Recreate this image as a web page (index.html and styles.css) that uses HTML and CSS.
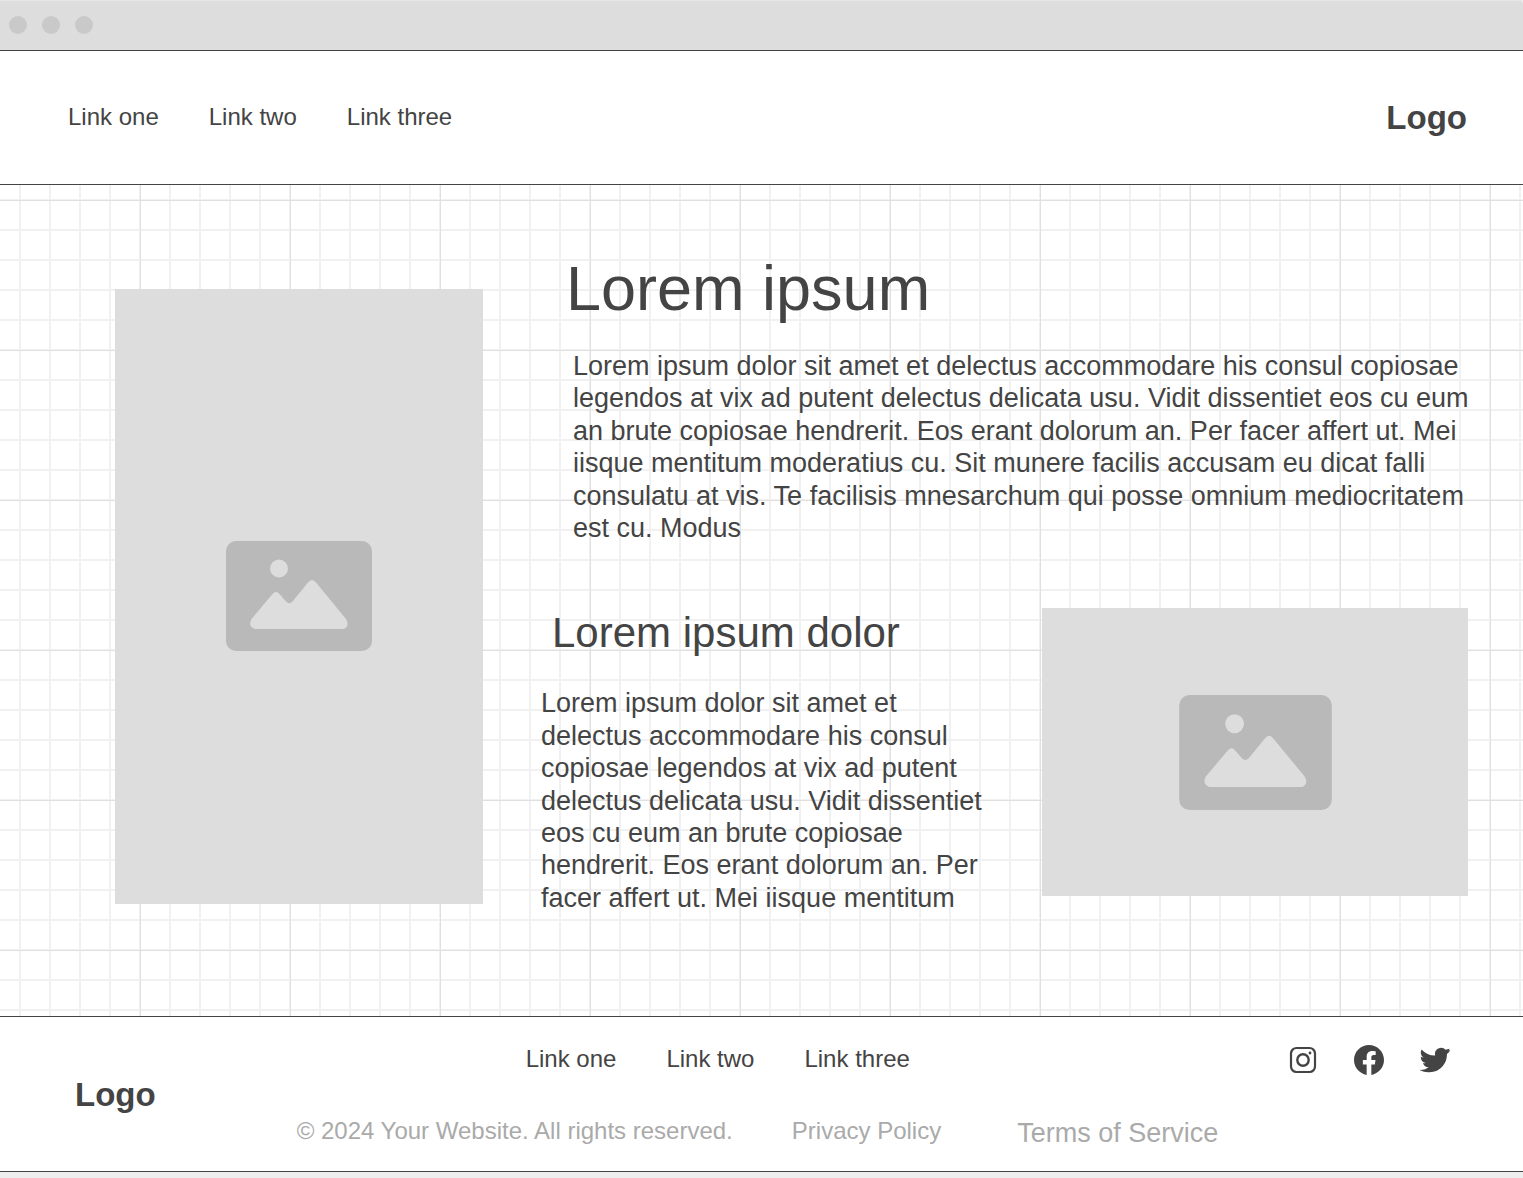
FILE: index.html
```html
<!DOCTYPE html>
<html lang="en">
<head>
<meta charset="utf-8">
<title>Lorem ipsum</title>
<link rel="stylesheet" href="styles.css">
</head>
<body>
<svg class="symbols" aria-hidden="true">
  <symbol id="picture" viewBox="0 0 146 110">
    <rect width="146" height="110" rx="10" fill="#b9b9b9"/>
    <circle cx="53" cy="27.500" r="9" fill="#ddd"/>
    <path fill="#ddd" d="M25.500 78 46.500 53Q50 49 53.500 53L60 60.500Q63.300 64 66.500 60.500L82 41.500Q86 36.500 90 41.500L120 78Q124 84.500 118 88H29Q21.500 85.500 25.500 78Z"/>
  </symbol>
</svg>
<div class="titlebar"><span class="dot"></span><span class="dot"></span><span class="dot"></span></div>
<header class="site-header">
  <nav class="links" aria-label="Main">
    <a href="#one">Link one</a>
    <a href="#two">Link two</a>
    <a href="#three">Link three</a>
  </nav>
  <a class="logo" href="#home">Logo</a>
</header>
<main class="content">
  <div class="picture picture-tall"><svg class="picture-icon" role="img" aria-label="Image placeholder"><use href="#picture"/></svg></div>
  <div class="article">
    <section class="intro">
      <h1>Lorem ipsum</h1>
      <p>Lorem ipsum dolor sit amet et delectus accommodare his consul copiosae legendos at vix ad putent delectus delicata usu. Vidit dissentiet eos cu eum an brute copiosae hendrerit. Eos erant dolorum an. Per facer affert ut. Mei iisque mentitum moderatius cu. Sit munere facilis accusam eu dicat falli consulatu at vis. Te facilisis mnesarchum qui posse omnium mediocritatem est cu. Modus</p>
    </section>
    <section class="feature">
      <div class="feature-text">
        <h2>Lorem ipsum dolor</h2>
        <p>Lorem ipsum dolor sit amet et delectus accommodare his consul copiosae legendos at vix ad putent delectus delicata usu. Vidit dissentiet eos cu eum an brute copiosae hendrerit. Eos erant dolorum an. Per facer affert ut. Mei iisque mentitum</p>
      </div>
      <div class="picture picture-wide"><svg class="picture-icon" role="img" aria-label="Image placeholder"><use href="#picture"/></svg></div>
    </section>
  </div>
</main>
<footer class="site-footer">
  <a class="logo" href="#home">Logo</a>
  <div class="footer-middle">
    <nav class="links" aria-label="Footer">
      <a href="#one">Link one</a>
      <a href="#two">Link two</a>
      <a href="#three">Link three</a>
    </nav>
    <div class="legal">
      <span>© 2024 Your Website. All rights reserved.</span>
      <a href="#privacy">Privacy Policy</a>
      <a class="terms" href="#terms">Terms of Service</a>
    </div>
  </div>
  <div class="social">
    <a href="#instagram" aria-label="Instagram"><svg viewBox="0 0 30 30" fill="none" stroke="#444"><rect x="3" y="3" width="24" height="24" rx="5.500" stroke-width="2.200"/><circle cx="15" cy="15" r="5.700" stroke-width="2.400"/><circle cx="22" cy="8" r="1.400" fill="#444" stroke="none"/></svg></a>
    <a href="#facebook" aria-label="Facebook"><svg viewBox="0 0 24 24" fill="#444"><path d="M24 12.073c0-6.627-5.373-12-12-12s-12 5.373-12 12c0 5.990 4.388 10.954 10.125 11.854v-8.385H7.078v-3.470h3.047V9.430c0-3.007 1.792-4.669 4.533-4.669 1.312 0 2.686.235 2.686.235v2.953H15.830c-1.491 0-1.956.925-1.956 1.874v2.250h3.328l-.532 3.470h-2.796v8.385C19.612 23.027 24 18.062 24 12.073z"/></svg></a>
    <a href="#twitter" aria-label="Twitter"><svg viewBox="0 0 24 24" fill="#444"><path d="M23.643 4.937l.5-.9-1.300.3 1-1.400-1.865.551a9.900 9.900 0 01-1.462.379 4.920 4.920 0 00-8.390 4.490A13.980 13.980 0 011.310 3.530a4.930 4.930 0 001.524 6.574 4.900 4.900 0 01-2.230-.616v.060a4.930 4.930 0 003.950 4.830 4.900 4.900 0 01-2.224.084 4.930 4.930 0 004.600 3.420A9.900 9.900 0 01-.500 19.840a13.940 13.940 0 008.048 1.912c9.057 0 14.010-7.503 14.010-14.010q0-.320-.014-.637a10 10 0 002.100-2.167z"/></svg></a>
  </div>
</footer>
</body>
</html>
```
FILE: styles.css
```css
* { box-sizing: border-box; }

body {
  margin: 0;
  background: #eee;
  color: #444;
  font: 27px/1.2 "Liberation Sans", Arial, sans-serif;
}

h1, h2, p { margin: 0; font-weight: 400; }
a { color: inherit; text-decoration: none; }
svg { display: block; }
.symbols { display: none; }

.titlebar {
  display: flex;
  align-items: center;
  gap: 15px;
  height: 51px;
  padding: 0 9px 2px;
  background: #ddd;
  border-top: 1px solid #e6e6e6;
  border-bottom: 1px solid #444;
  border-top-right-radius: 4px;
}
.dot { width: 18px; height: 18px; border-radius: 50%; background: #c9c9c9; }

.site-header {
  display: flex;
  align-items: center;
  justify-content: space-between;
  min-height: 134px;
  padding: 0 56px 0 68px;
  background: #fff;
  border-bottom: 1px solid #444;
}
.links { display: flex; gap: 50px; padding-bottom: 2px; font-size: 24px; line-height: 32px; }
.logo { font-size: 33px; font-weight: 700; line-height: 32px; }

.content {
  display: flex;
  align-items: flex-start;
  gap: 58px;
  padding: 71px 32px 102px 115px;
  background-color: #fff;
  background-image:
    linear-gradient(90deg, #e0e0e0 1px, transparent 1px),
    linear-gradient(#e0e0e0 1px, transparent 1px),
    linear-gradient(90deg, #f1f1f1 2px, transparent 2px),
    linear-gradient(#f1f1f1 2px, transparent 2px);
  background-size: 150px 150px, 150px 150px, 30px 30px, 30px 30px;
  background-position: 140px 15px, 140px 15px, 19px 14px, 19px 14px;
}
.picture { display: flex; align-items: center; justify-content: center; background: #ddd; }
.picture-tall { flex: 0 0 368px; height: 615px; margin-top: 33px; padding-bottom: 2px; }
.picture-tall .picture-icon { width: 146px; height: 110px; }
.picture-wide { flex: 0 0 426px; height: 288px; }
.picture-wide .picture-icon { width: 153px; height: 115px; }

.article { flex: 1; min-width: 0; }
.intro { padding-left: 25px; }
h1 { font-size: 63px; line-height: 64px; margin-bottom: 30px; }
.intro p { padding-left: 7px; }
.feature { display: flex; justify-content: space-between; padding-right: 23px; margin-top: 64px; }
.feature-text { flex: 0 1 456px; }
h2 { padding-left: 11px; margin-bottom: 29px; font-size: 42px; line-height: 50px; }

.site-footer {
  display: flex;
  align-items: center;
  min-height: 156px;
  padding: 2px 73px 0 75px;
  background: #fff;
  border-top: 1px solid #444;
  border-bottom: 1px solid #444;
}
.footer-middle { flex: 1; margin-left: 141px; padding-top: 4px; }
.footer-middle .links { padding-left: 229px; }
.legal { display: flex; gap: 59px; margin-top: 38px; font-size: 24px; line-height: 32px; color: #aaa; }
.terms { margin-left: 17px; font-size: 27px; line-height: 36px; }
.social { display: flex; align-self: flex-start; gap: 36px; padding-top: 26px; }
.social svg { width: 30px; height: 30px; }
```
